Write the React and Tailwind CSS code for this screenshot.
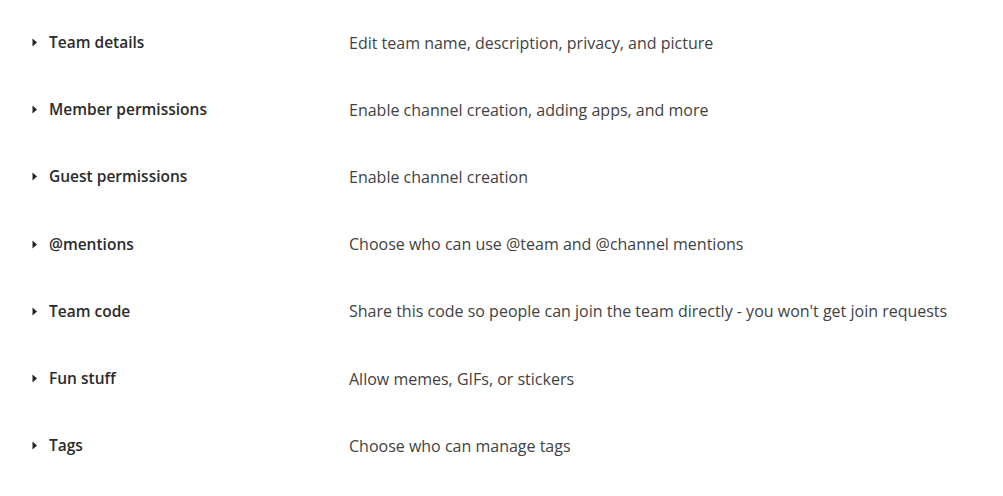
import React from "react";

const ROWS = [
  { label: "Team details", desc: "Edit team name, description, privacy, and picture" },
  { label: "Member permissions", desc: "Enable channel creation, adding apps, and more" },
  { label: "Guest permissions", desc: "Enable channel creation" },
  { label: "@mentions", desc: "Choose who can use @team and @channel mentions" },
  { label: "Team code", desc: "Share this code so people can join the team directly - you won't get join requests" },
  { label: "Fun stuff", desc: "Allow memes, GIFs, or stickers" },
  { label: "Tags", desc: "Choose who can manage tags" },
];

export default function App() {
  return (
    <div className="h-[496px] w-[1003px] bg-white pt-[9px] font-['Open_Sans',sans-serif]">
      {ROWS.map((r) => (
        <div key={r.label} className="flex h-[67.2px] items-center">
          <div className="flex w-[349px] items-center pl-[32px]">
            <svg width="6" height="9" viewBox="0 0 6 9" className="mr-[11px]">
              <path d="M0.5 0.5 L5 4.5 L0.5 8.5 Z" fill="#242424" />
            </svg>
            <span className="text-[15.5px] font-semibold text-[#2b2b2b]">{r.label}</span>
          </div>
          <span className="text-[16px] text-[#424242]">{r.desc}</span>
        </div>
      ))}
    </div>
  );
}
